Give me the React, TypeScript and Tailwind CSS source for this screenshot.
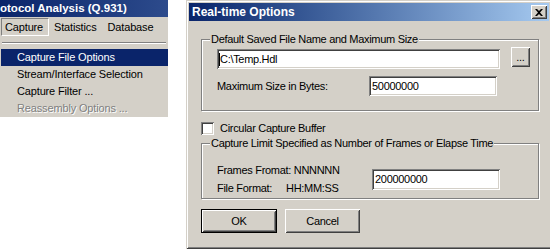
import React from "react";

const raised =
  "shadow-[inset_1px_1px_0_#fff,inset_-1px_-1px_0_#404040,inset_2px_2px_0_#d4d0c8,inset_-2px_-2px_0_#808080]";
const sunken =
  "shadow-[inset_1px_1px_0_#808080,inset_-1px_-1px_0_#fff,inset_2px_2px_0_#404040,inset_-2px_-2px_0_#d4d0c8]";
const etched = "border border-[#808080] shadow-[1px_1px_0_#fff,inset_1px_1px_0_#fff]";

const menuItems = [
  { label: "Capture File Options", active: true },
  { label: "Stream/Interface Selection" },
  { label: "Capture Filter ..." },
  { label: "Reassembly Options ...", disabled: true },
];

const MenuPanel = () => (
  <div className="w-[168px] h-[117px] shrink-0 bg-[#d4d0c8] flex flex-col tracking-[-0.15px]">
    <div className="h-[17px] bg-gradient-to-r from-[#0a246a] to-[#2d4b8c] text-white font-bold text-[11.5px] leading-[17px] tracking-normal whitespace-nowrap overflow-hidden">
      otocol Analysis (Q.931)
    </div>
    <div className="h-[20px] flex items-center pl-[1px]">
      <div className="w-[48px] h-[18px] pl-[3px] leading-[16px] border border-t-[#808080] border-l-[#808080] border-b-white border-r-white">
        Capture
      </div>
      <div className="ml-[5px]">Statistics</div>
      <div className="ml-[11px]">Database</div>
    </div>
    <div className="mt-[5px] mx-[2px] h-[2px] border-t border-t-[#808080] border-b border-b-white" />
    <div className="mt-[5px] flex flex-col">
      {menuItems.map((item) => (
        <div
          key={item.label}
          className={
            "ml-[1px] h-[17px] leading-[17px] pl-[16px] whitespace-nowrap " +
            (item.active
              ? "bg-[#0a246a] text-white"
              : item.disabled
              ? "text-[#808080] [text-shadow:1px_1px_0_#fff]"
              : "text-black")
          }
        >
          {item.label}
        </div>
      ))}
    </div>
  </div>
);

const CloseGlyph = () => (
  <svg width="8" height="7" viewBox="0 0 8 7">
    <path d="M0 0h2l2 2 2-2h2L5 3.5 8 7H6L4 5 2 7H0l3-3.5z" fill="#000" />
  </svg>
);

const RealTimeOptions = () => (
  <div className="ml-[18px] w-[366px] h-[249px] shrink-0 bg-[#d4d0c8] p-[3px] flex flex-col shadow-[inset_1px_1px_0_#d4d0c8,inset_-1px_-1px_0_#404040,inset_2px_2px_0_#fff,inset_-2px_-2px_0_#808080]">
    <div className="h-[18px] bg-gradient-to-r from-[#0a246a] to-[#a6caf0] flex items-center justify-between pl-[3px] pr-[2px]">
      <span className="text-white font-bold text-[12px] leading-none">Real-time Options</span>
      <div className={`w-[16px] h-[14px] bg-[#d4d0c8] flex items-center justify-center ${raised}`}>
        <CloseGlyph />
      </div>
    </div>

    <div className="pl-[12px] flex flex-col tracking-[-0.3px]">
      <fieldset className={`mt-[11px] w-[338px] pl-[8px] pr-[8px] pb-[14px] ${etched}`}>
        <legend className="px-[1px] leading-[14px] bg-[#d4d0c8]">Default Saved File Name and Maximum Size</legend>
        <div className="pt-[1px] pl-[7px] flex items-start">
          <div className={`mt-[2px] w-[283px] h-[20px] bg-white pl-[2px] flex items-center ${sunken}`}>
            <span className="w-[1px] h-[13px] bg-black" />
            <span>C:\Temp.Hdl</span>
          </div>
          <div className={`ml-[11px] w-[19px] h-[20px] flex items-center justify-center leading-none ${raised}`}>
            ...
          </div>
        </div>
        <div className="mt-[7px] pl-[7px] flex items-center">
          <span className="w-[152px]">Maximum Size in Bytes:</span>
          <div className={`w-[128px] h-[20px] bg-white pl-[3px] flex items-center ${sunken}`}>50000000</div>
        </div>
      </fieldset>

      <div className="mt-[11px] h-[13px] flex items-center">
        <span className={`w-[13px] h-[13px] bg-white ${sunken}`} />
        <span className="ml-[6px]">Circular Capture Buffer</span>
      </div>

      <fieldset className={`mt-[1px] w-[338px] pl-[8px] pr-[8px] pb-[1px] ${etched}`}>
        <legend className="px-[1px] leading-[14px] bg-[#d4d0c8]">
          Capture Limit Specified as Number of Frames or Elapse Time
        </legend>
        <div className="pt-[11px] pl-[7px] flex items-center">
          <div className="w-[155px] flex flex-col leading-[18px]">
            <span>Frames Fromat: NNNNNN</span>
            <span className="flex">
              <span className="w-[69px]">File Format:</span>
              <span>HH:MM:SS</span>
            </span>
          </div>
          <div className={`w-[128px] h-[21px] bg-white pl-[3px] flex items-center ${sunken}`}>200000000</div>
        </div>
      </fieldset>

      <div className="mt-[10px] flex gap-[8px]">
        <button className={`w-[76px] h-[24px] border border-black bg-[#d4d0c8] ${raised}`}>OK</button>
        <button className={`w-[75px] h-[24px] bg-[#d4d0c8] ${raised}`}>Cancel</button>
      </div>
    </div>
  </div>
);

export default function App() {
  return (
    <div className="w-[550px] h-[252px] bg-white overflow-hidden flex items-start font-['Liberation_Sans',Arial,sans-serif] text-[11px] text-black">
      <MenuPanel />
      <RealTimeOptions />
    </div>
  );
}
